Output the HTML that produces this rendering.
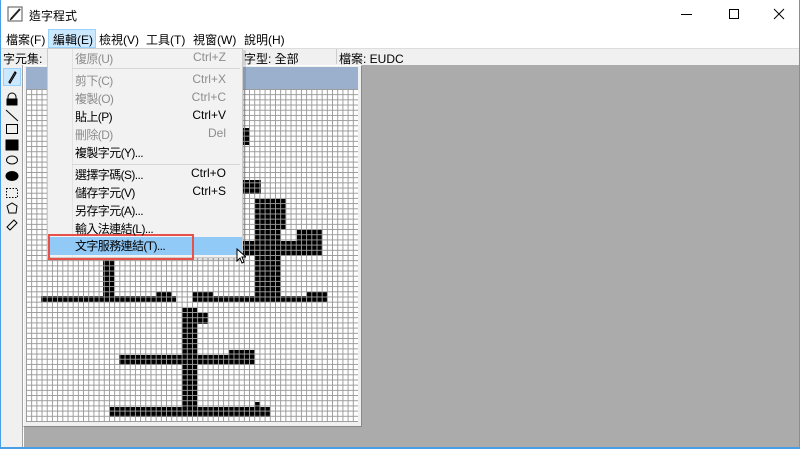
<!DOCTYPE html>
<html><head><meta charset="utf-8"><style>
*{margin:0;padding:0;box-sizing:border-box}
body{width:800px;height:449px;overflow:hidden;background:#fff;font-family:"Liberation Sans","Noto Sans CJK TC",sans-serif;font-size:12px;color:#000;position:relative}
.a{position:absolute;white-space:nowrap}
.b{position:absolute;background:#000}
.mi{position:absolute;left:75px;white-space:nowrap;letter-spacing:-0.6px}
.sc{position:absolute;right:17px;white-space:nowrap}
.g{color:#8d8d8d}
</style></head><body>
<div class="a" style="left:0;top:0;width:1px;height:449px;background:#4a9ee8"></div>
<div class="a" style="left:799px;top:0;width:1px;height:449px;background:#4a9ee8"></div>
<div class="a" style="left:0;top:447px;width:800px;height:2px;background:#4a9ee8"></div>
<!-- title -->
<svg class="a" style="left:7px;top:6px" width="17" height="17"><rect x="1" y="1" width="14" height="14" fill="#fff" stroke="#555"/><path d="M4 13 L13 3" stroke="#222" stroke-width="2"/><path d="M3 14 L5 12" stroke="#000"/></svg>
<div class="a" style="left:29px;top:7px;font-size:12px">造字程式</div>
<div class="a" style="left:681px;top:14px;width:11px;height:1px;background:#000"></div>
<div class="a" style="left:729px;top:9px;width:10px;height:10px;border:1px solid #000"></div>
<svg class="a" style="left:773px;top:8px" width="12" height="12"><path d="M1 1L11 11M11 1L1 11" stroke="#000"/></svg>
<!-- menubar -->
<div class="a" style="left:48px;top:29px;width:48px;height:19px;background:#cce8ff;border:1px solid #99d1ff"></div>
<div class="a" style="left:6px;top:31px">檔案(F)</div>
<div class="a" style="left:53px;top:31px">編輯(E)</div>
<div class="a" style="left:99px;top:31px">檢視(V)</div>
<div class="a" style="left:146px;top:31px">工具(T)</div>
<div class="a" style="left:193px;top:31px">視窗(W)</div>
<div class="a" style="left:244px;top:31px">說明(H)</div>
<!-- info bar -->
<div class="a" style="left:1px;top:48px;width:798px;height:17px;background:#f0f0f0;border-top:1px solid #ddd"></div>
<div class="a" style="left:3px;top:50px">字元集:</div>
<div class="a" style="left:244px;top:50px">字型: 全部</div>
<div class="a" style="left:336px;top:49px;width:1px;height:15px;background:#ccc"></div>
<div class="a" style="left:339px;top:50px">檔案: EUDC</div>
<!-- toolbox -->
<div class="a" style="left:1px;top:65px;width:22px;height:382px;background:#f0f0f0;border-right:1px solid #a0a0a0"></div>
<div class="a" style="left:3px;top:68px;width:18px;height:18px;background:#cce8ff;border:1px solid #99d1ff"></div>
<svg class="a" style="left:4px;top:69px" width="16" height="170" fill="none" stroke="#000">
<path d="M5 13 L11 3 L12 4 L6 14 Z" stroke-width="1.2"/>
<path d="M4 32V28a4 4 0 0 1 8 0V32" /><rect x="3" y="30" width="10" height="6" fill="#000"/>
<path d="M2 41 L14 52"/>
<rect x="2.5" y="55.5" width="11" height="9"/>
<rect x="2" y="71" width="12" height="10" fill="#000"/>
<ellipse cx="8" cy="91" rx="5.5" ry="4"/>
<ellipse cx="8" cy="107" rx="6" ry="4.5" fill="#000"/>
<rect x="2.5" y="119.5" width="11" height="9" stroke-dasharray="1.5 1.5"/>
<path d="M3 137 L8 134 L13 137 L12 144 L5 144 Z"/>
<path d="M3 158 L10 151 L13 154 L6 161 Z"/>
</svg>
<!-- client -->
<div class="a" style="left:24px;top:65px;width:775px;height:382px;background:#ababab"></div>
<div class="a" style="left:23px;top:65px;width:339px;height:362px;background:#f0f0f0;border:1px solid #fff;border-right-color:#888;border-bottom-color:#888"></div>
<div class="a" style="left:26px;top:67px;width:332px;height:22px;background:#9ab0cc"></div>
<div class="a" style="left:26px;top:89px;width:332px;height:333px;background:#fff;overflow:hidden">
<div class="b" style="left:217px;top:39px;width:7px;height:17px"></div>
<div class="b" style="left:204px;top:91px;width:31px;height:14px"></div>
<div class="b" style="left:229px;top:110px;width:31px;height:31px"></div>
<div class="b" style="left:229px;top:110px;width:26px;height:98px"></div>
<div class="b" style="left:167px;top:152px;width:129px;height:15px"></div>
<div class="b" style="left:271px;top:141px;width:25px;height:12px"></div>
<div class="b" style="left:77px;top:168px;width:11px;height:40px"></div>
<div class="b" style="left:15px;top:207px;width:135px;height:6px"></div>
<div class="b" style="left:130px;top:203px;width:16px;height:5px"></div>
<div class="b" style="left:166px;top:207px;width:135px;height:6px"></div>
<div class="b" style="left:166px;top:203px;width:21px;height:5px"></div>
<div class="b" style="left:281px;top:203px;width:20px;height:5px"></div>
<div class="b" style="left:156px;top:219px;width:15px;height:100px"></div>
<div class="b" style="left:171px;top:224px;width:11px;height:11px"></div>
<div class="b" style="left:93px;top:266px;width:136px;height:10px"></div>
<div class="b" style="left:203px;top:261px;width:26px;height:6px"></div>
<div class="b" style="left:83px;top:318px;width:161px;height:10px"></div>
<div class="b" style="left:229px;top:313px;width:5px;height:6px"></div>
<div style="position:absolute;left:0;top:0;width:100%;height:100%;background-image:linear-gradient(to right,#9a9a9a 1px,transparent 1px),linear-gradient(to bottom,#9a9a9a 1px,transparent 1px);background-size:5.19px 5.19px"></div>
</div>
<!-- dropdown menu -->
<div class="a" style="left:49px;top:50px;width:197px;height:210px;background:rgba(0,0,0,0.12)"></div>
<div class="a" style="left:47px;top:48px;width:196px;height:210px;background:#f2f2f2;border:1px solid #ccc">
<div class="a" style="left:24px;top:0;width:1px;height:208px;background:#e2e2e2"></div>
<div class="a" style="left:24px;top:19px;width:168px;height:1px;background:#d7d7d7"></div>
<div class="a" style="left:24px;top:115px;width:168px;height:1px;background:#d7d7d7"></div>
<div class="a" style="left:1px;top:188px;width:193px;height:18px;background:#91c9f7"></div>
</div>
<div class="a" style="left:48px;top:234px;width:146px;height:26px;border:2px solid #e8504a"></div>
<div class="a" style="left:47px;top:48px;width:196px;height:210px">
<div class="mi g" style="left:28px;top:2px">復原(U)</div><div class="sc g" style="top:2px">Ctrl+Z</div>
<div class="mi g" style="left:28px;top:24px">剪下(C)</div><div class="sc g" style="top:24px">Ctrl+X</div>
<div class="mi g" style="left:28px;top:42px">複製(O)</div><div class="sc g" style="top:42px">Ctrl+C</div>
<div class="mi" style="left:28px;top:60px">貼上(P)</div><div class="sc" style="top:60px">Ctrl+V</div>
<div class="mi g" style="left:28px;top:78px">刪除(D)</div><div class="sc g" style="top:78px">Del</div>
<div class="mi" style="left:28px;top:96px">複製字元(Y)...</div>
<div class="mi" style="left:28px;top:118px">選擇字碼(S)...</div><div class="sc" style="top:118px">Ctrl+O</div>
<div class="mi" style="left:28px;top:136px">儲存字元(V)</div><div class="sc" style="top:136px">Ctrl+S</div>
<div class="mi" style="left:28px;top:154px">另存字元(A)...</div>
<div class="mi" style="left:28px;top:172px">輸入法連結(L)...</div>
<div class="mi" style="left:28px;top:189px">文字服務連結(T)...</div>
</div>
<svg class="a" style="left:236px;top:248px" width="10" height="16"><path d="M1 1 L1 13 L4 10 L6 15 L8 14 L6 9 L10 9 Z" fill="#fff" stroke="#000"/></svg>
</body></html>
